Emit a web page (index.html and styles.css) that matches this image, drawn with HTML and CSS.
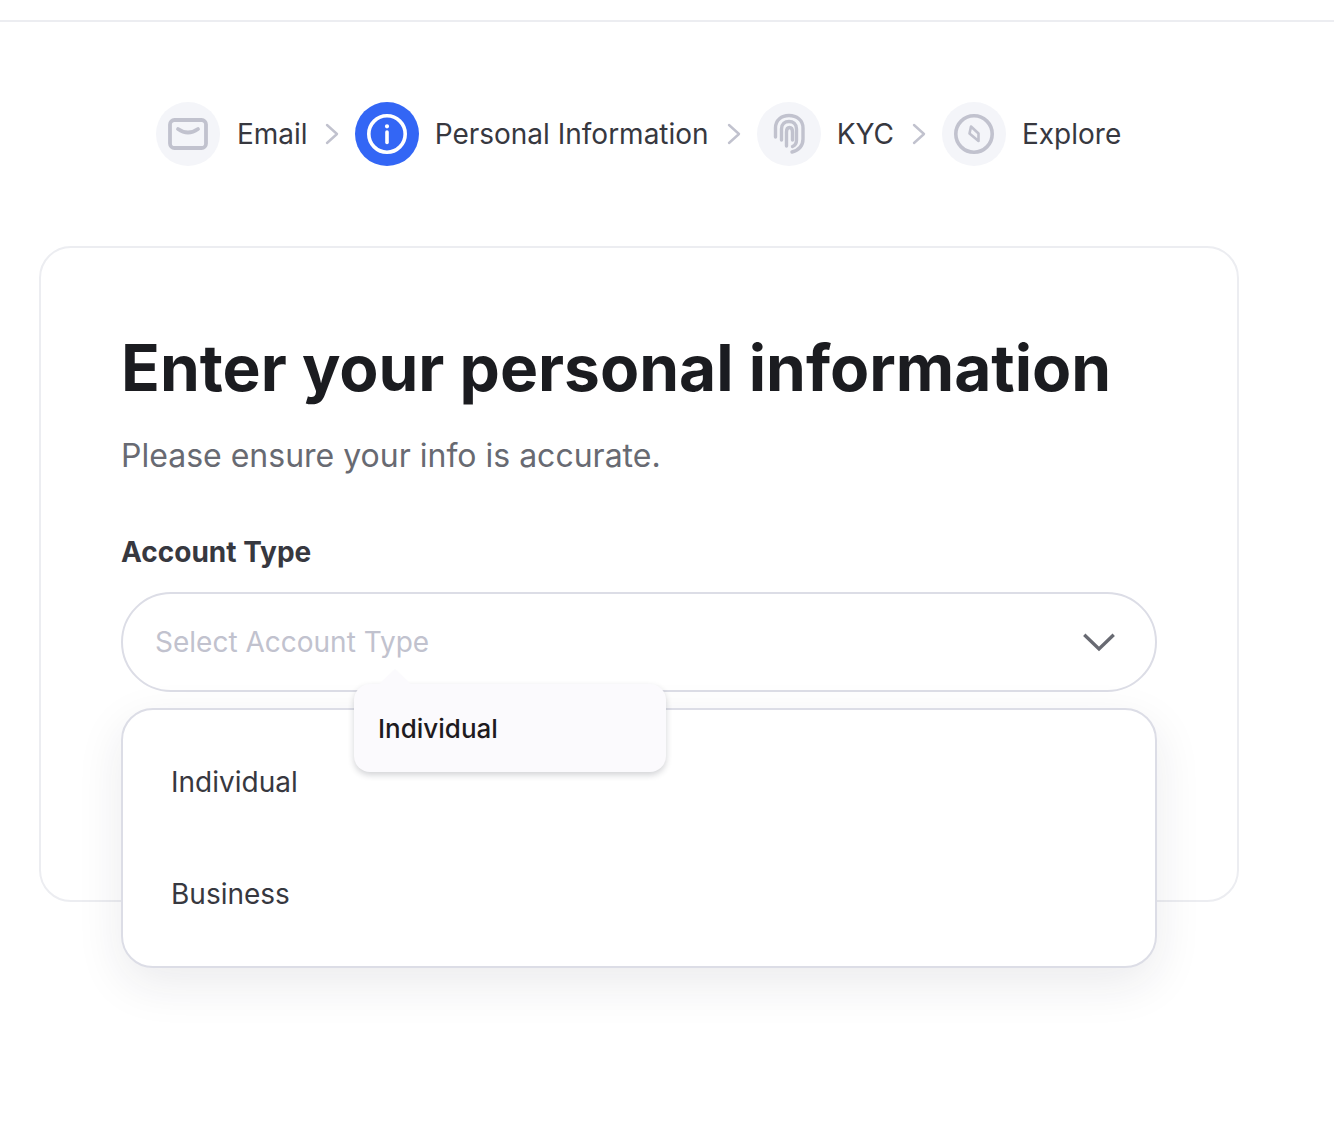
FILE: index.html
```html
<!DOCTYPE html>
<html lang="en">
<head>
<meta charset="utf-8">
<title>Enter your personal information</title>
<link rel="stylesheet" href="styles.css">
</head>
<body>
<div class="topbar"></div>
<main class="page">
  <nav class="stepper">
    <div class="step">
      <span class="badge">
        <svg width="40" height="32" viewBox="0 0 40 32" fill="none" stroke="#c1c2ce" stroke-width="3.8" stroke-linecap="round"><rect x="2" y="2" width="36" height="28" rx="4.500"/><path d="M10 11Q20 18 30 11"/></svg>
      </span>
      <span class="label">Email</span>
    </div>
    <svg class="sep" width="14" height="22" viewBox="0 0 14 22" fill="none" stroke="#c1c2ce" stroke-width="2.4" stroke-linecap="round" stroke-linejoin="round"><path d="M2 2l10 9-10 9"/></svg>
    <div class="step">
      <span class="badge badge-active">
        <svg width="40" height="40" viewBox="0 0 40 40" fill="none" stroke="#fff" stroke-width="3.600" stroke-linecap="round"><circle cx="20" cy="20" r="18.200"/><path d="M20 18v10.500"/><circle cx="20" cy="12.300" r="1.300" fill="#fff" stroke-width="1.600"/></svg>
      </span>
      <span class="label">Personal Information</span>
    </div>
    <svg class="sep" width="14" height="22" viewBox="0 0 14 22" fill="none" stroke="#c1c2ce" stroke-width="2.4" stroke-linecap="round" stroke-linejoin="round"><path d="M2 2l10 9-10 9"/></svg>
    <div class="step">
      <span class="badge">
        <svg width="34" height="42" viewBox="0 0 34 42" fill="none" stroke="#c1c2ce" stroke-width="3.400" stroke-linecap="round"><path d="M3.500 24V15C3.500 7 9.500 2.500 17 2.500S31 7 31 15V26C31 33 27 37 20 39"/><path d="M9.500 27V16C9.500 11 13 8.500 17 8.500S24.500 11 24.500 16V27C24.500 30 23 32.500 20.500 33.500"/><path d="M14.500 33V19C14.500 16.500 15.500 14.500 17.500 14.500S20.500 16.500 20.500 19V27"/></svg>
      </span>
      <span class="label">KYC</span>
    </div>
    <svg class="sep" width="14" height="22" viewBox="0 0 14 22" fill="none" stroke="#c1c2ce" stroke-width="2.4" stroke-linecap="round" stroke-linejoin="round"><path d="M2 2l10 9-10 9"/></svg>
    <div class="step">
      <span class="badge">
        <svg width="40" height="40" viewBox="0 0 40 40" fill="none" stroke="#c1c2ce" stroke-width="3.600" stroke-linejoin="round"><circle cx="20" cy="20" r="18.200"/><path d="M17 12.500L24.500 19.500V27L15.500 19.500Z" stroke-width="2.600"/></svg>
      </span>
      <span class="label">Explore</span>
    </div>
  </nav>

  <section class="card">
    <h1 class="title">Enter your personal information</h1>
    <p class="subtitle">Please ensure your info is accurate.</p>
    <label class="field-label">Account Type</label>
    <div class="select-wrap">
      <div class="select">
        <span class="placeholder">Select Account Type</span>
        <svg class="caret" width="32" height="20" viewBox="0 0 32 20" fill="none" stroke="#686a72" stroke-width="3.400" stroke-linecap="square"><path d="M2.500 4L16 17L29.500 4"/></svg>
      </div>
      <div class="tooltip">Individual</div>
      <ul class="menu">
        <li class="menu-item">Individual</li>
        <li class="menu-item">Business</li>
      </ul>
    </div>
  </section>
</main>
</body>
</html>
```
FILE: styles.css
```css
* { box-sizing: border-box; }
html, body { margin: 0; padding: 0; background: #fff; }
body { font-family: Inter, "Liberation Sans", sans-serif; color: #37383f; height: 1132px; overflow: hidden; }
.topbar { height: 22px; border-bottom: 2px solid #ecedf1; }
.page { padding: 80px 95px 0 39px; }
.stepper { display: flex; align-items: center; padding-left: 117px; height: 64px; }
.step { display: flex; align-items: center; gap: 16px; }
.step:first-child { gap: 17px; margin-right: -1px; }
.badge { width: 64px; height: 64px; border-radius: 50%; background: #f4f5f9; display: flex; align-items: center; justify-content: center; flex: none; }
.badge-active { background: #3366f5; }
.label { font-size: 28px; line-height: 34px; color: #37383f; white-space: nowrap; }
.sep { flex: none; margin: 0 16px 0 18px; }
.card { margin-top: 80px; width: 1200px; height: 656px; border: 2px solid #ecedf1; border-radius: 32px; padding: 82px 80px 0; background: #fff; }
.title { margin: 0; font-size: 64px; line-height: 76px; font-weight: 700; color: #1b1c20; white-space: nowrap; }
.subtitle { margin: 30px 0 0; font-size: 32px; line-height: 40px; color: #686a72; }
.field-label { display: block; margin-top: 58px; font-size: 28px; line-height: 36px; font-weight: 700; color: #37383f; }
.select-wrap { position: relative; margin-top: 22px; width: 1036px; }
.select { height: 100px; border: 2px solid #dcdde6; border-radius: 50px; padding: 0 40px 0 32px; display: flex; align-items: center; justify-content: space-between; background: #fff; }
.placeholder { font-size: 28px; color: #c1c2ce; }
.menu { position: absolute; top: 116px; left: 0; width: 1036px; height: 260px; margin: 0; padding: 16px 0; list-style: none; background: #fff; border: 2px solid #dcdde6; border-radius: 32px; box-shadow: 0 16px 48px rgba(30, 34, 50, .09); }
.menu-item { height: 112px; padding: 0 48px; display: flex; align-items: center; font-size: 28px; color: #37383f; }
.tooltip { position: absolute; z-index: 2; top: 92px; left: 233px; width: 312px; height: 88px; padding-left: 24px; display: flex; align-items: center; background: #fbfafd; border-radius: 16px; font-size: 26px; font-weight: 500; color: #1e1a20; box-shadow: 0 3px 6px rgba(30, 34, 50, .2); }
.tooltip::before { content: ""; position: absolute; top: -15px; left: 24px; width: 0; height: 0; border-left: 17px solid transparent; border-right: 17px solid transparent; border-bottom: 16px solid #fbfafd; }
```
